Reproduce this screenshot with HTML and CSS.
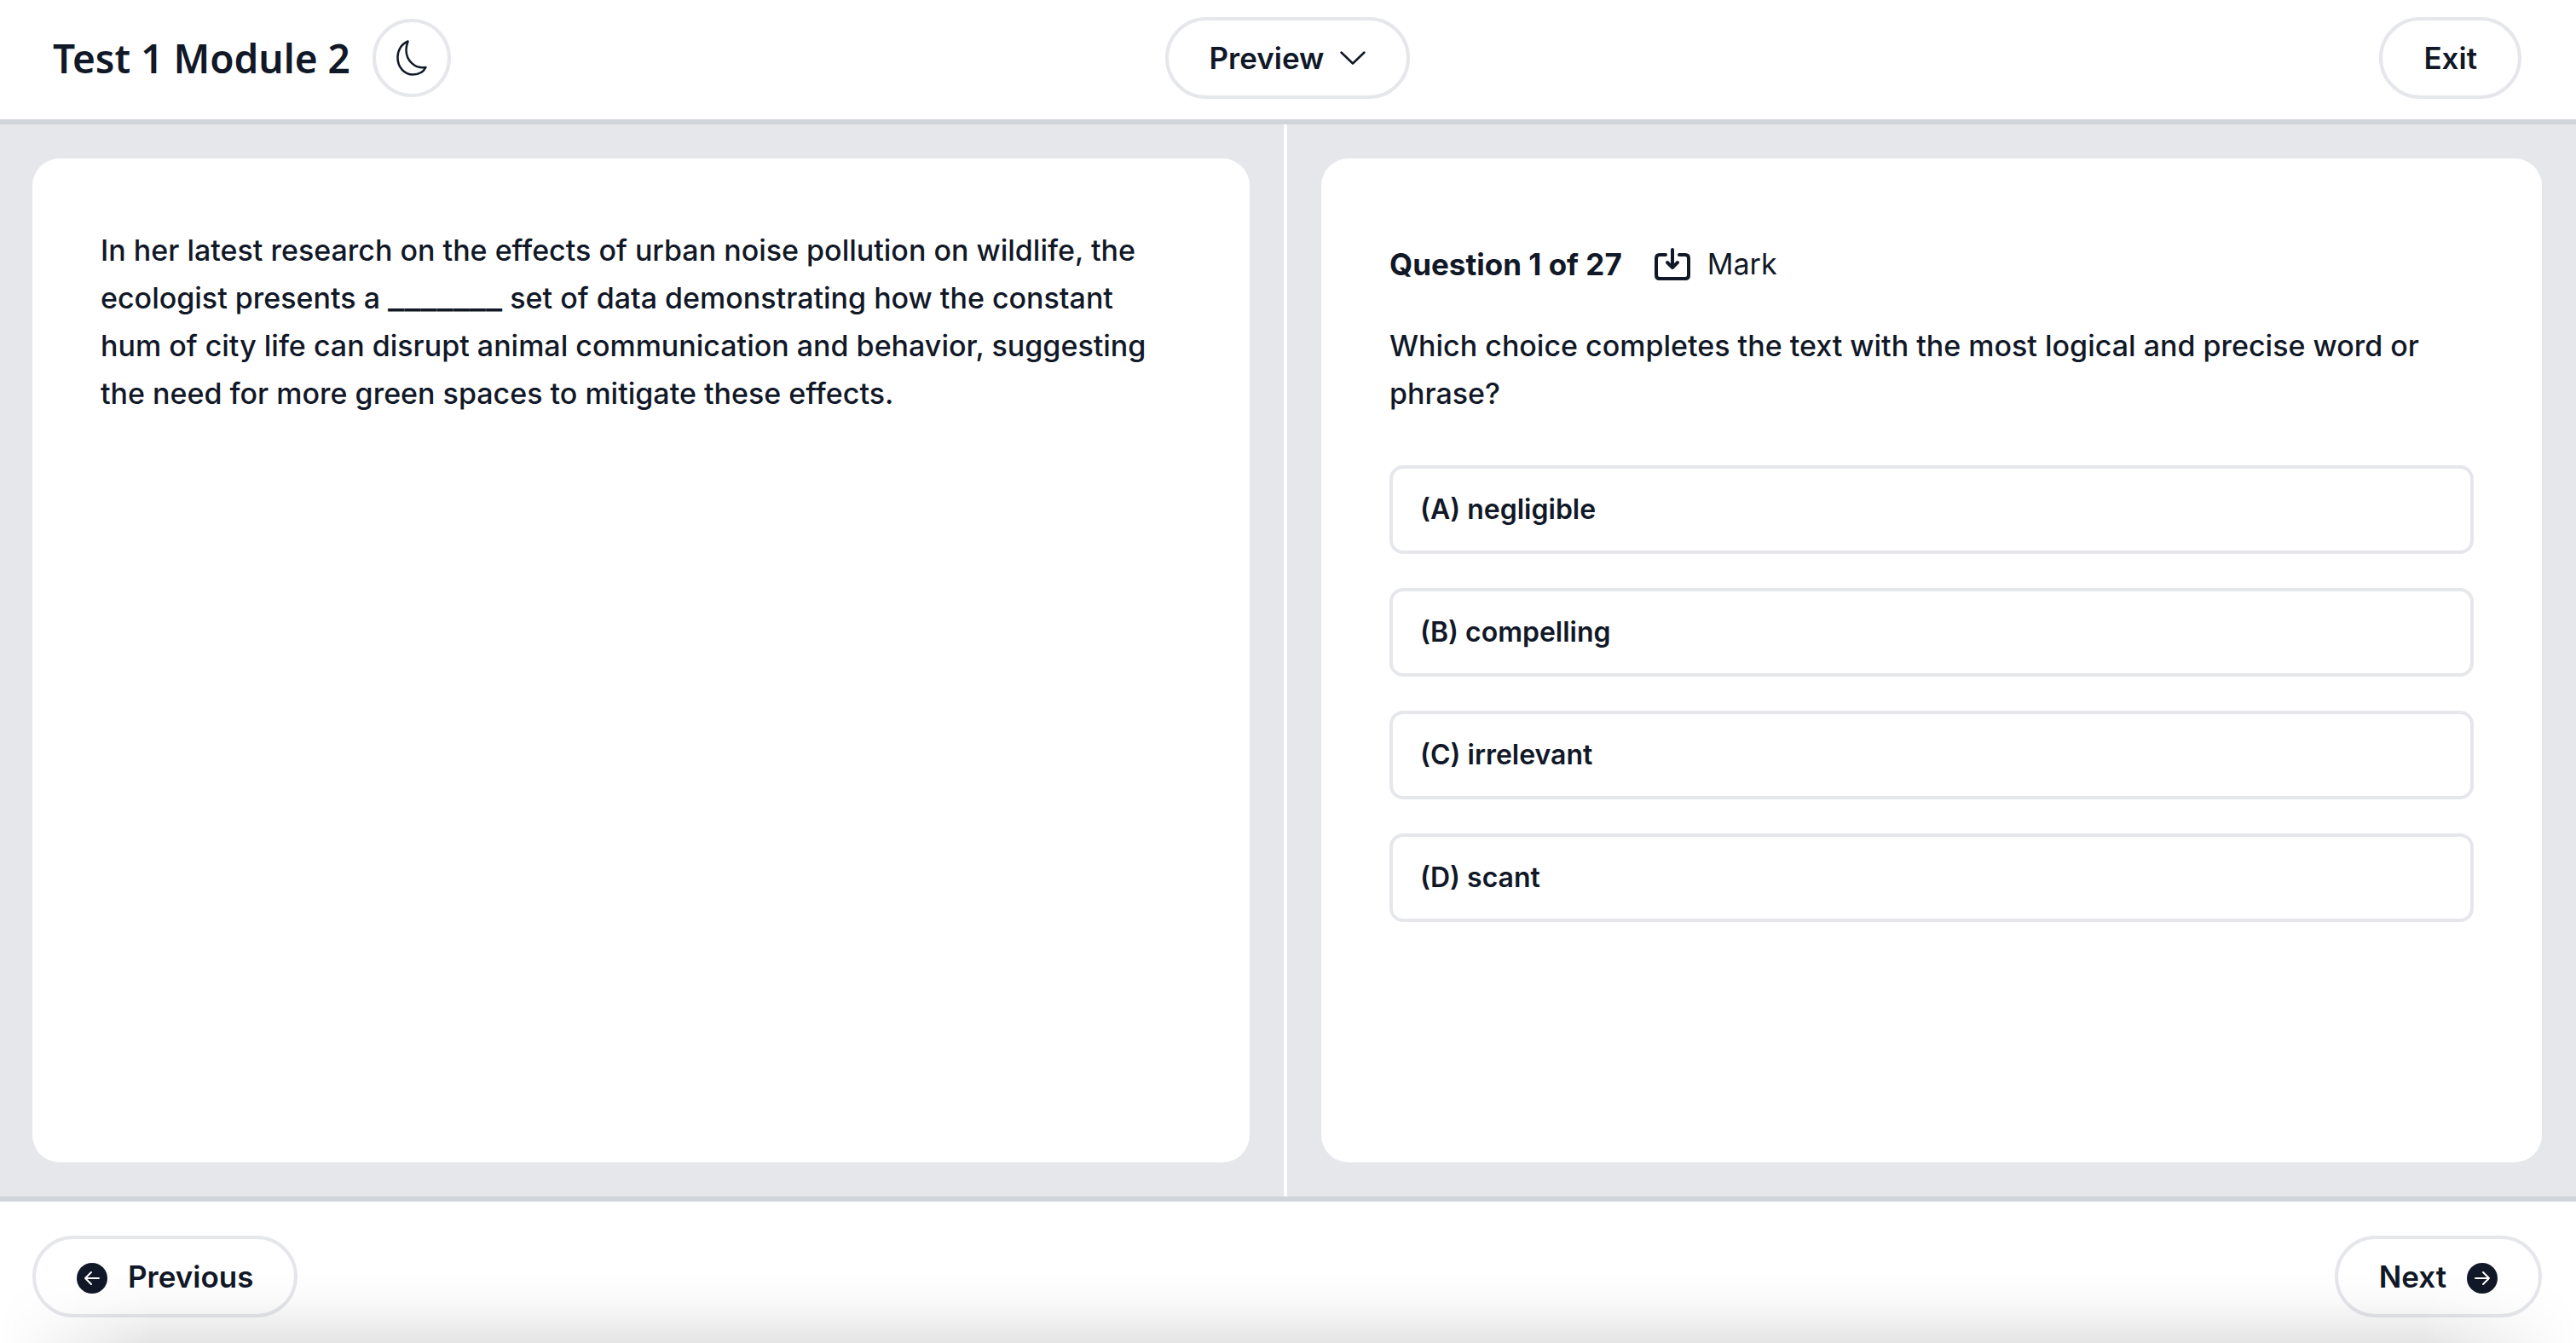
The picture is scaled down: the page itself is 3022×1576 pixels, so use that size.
FILE: index.html
```html
<!DOCTYPE html>
<html lang="en">
<head>
<meta charset="utf-8">
<meta name="viewport" content="width=device-width, initial-scale=1">
<title>Test 1 Module 2</title>
<link rel="stylesheet" href="styles.css">
</head>
<body>
<header class="topbar">
  <div class="topbar-start">
    <h1 class="title">Test 1 Module 2</h1>
    <button class="theme-toggle" type="button" aria-label="Toggle dark mode">
      <svg class="icon-moon" viewBox="0 0 36 42" fill="none" stroke="currentColor" stroke-width="2.500" stroke-linejoin="round" aria-hidden="true"><path d="M13.500 1.500C6 4.500 1.500 12 1.500 20.500C1.500 32 9.500 40.500 19.500 40.500C26 40.500 31.500 38 34.500 32C22 34 11.500 24.500 11.500 11.500C11.500 8 12.500 4.500 13.500 1.500Z"/></svg>
    </button>
  </div>
  <button class="pill" type="button">Preview
    <svg class="icon-chevron" viewBox="0 0 30 16" fill="none" stroke="currentColor" stroke-width="2.500" stroke-linecap="round" stroke-linejoin="round" aria-hidden="true"><path d="M1.500 1.500L15 14.500L28.500 1.500"/></svg>
  </button>
  <div class="topbar-end">
    <button class="pill" type="button">Exit</button>
  </div>
</header>

<main class="workspace">
  <section class="pane pane-passage">
    <article class="card">
      <p class="text">In her latest research on the effects of urban noise pollution on wildlife, the ecologist presents a <span class="blank">_______</span> set of data demonstrating how the constant hum of city life can disrupt animal communication and behavior, suggesting the need for more green spaces to mitigate these effects.</p>
    </article>
  </section>
  <section class="pane pane-question">
    <div class="card">
      <div class="question-head">
        <h2 class="question-count">Question 1 of 27</h2>
        <button class="mark" type="button">
          <svg class="icon-mark" viewBox="0 0 42 38" fill="none" stroke="currentColor" stroke-width="4" stroke-linecap="round" stroke-linejoin="round" aria-hidden="true"><path d="M13 8H6Q2 8 2 12V32Q2 36 6 36H36Q40 36 40 32V12Q40 8 36 8H29M21 2V23M15 17L21 23L27 17"/></svg>
          Mark
        </button>
      </div>
      <p class="text">Which choice completes the text with the most logical and precise word or phrase?</p>
      <div class="options">
        <button class="option" type="button">(A) negligible</button>
        <button class="option" type="button">(B) compelling</button>
        <button class="option" type="button">(C) irrelevant</button>
        <button class="option" type="button">(D) scant</button>
      </div>
    </div>
  </section>
</main>

<footer class="bottombar">
  <button class="pill pill-nav" type="button">
    <svg class="icon-arrow" viewBox="0 0 36 36" aria-hidden="true"><circle cx="18" cy="18" r="18" fill="currentColor"/><path d="M26 18H10M17 11L10 18L17 25" fill="none" stroke="#fff" stroke-width="2" stroke-linecap="round" stroke-linejoin="round"/></svg>
    Previous
  </button>
  <button class="pill pill-nav" type="button">
    Next
    <svg class="icon-arrow" viewBox="0 0 36 36" aria-hidden="true"><circle cx="18" cy="18" r="18" fill="currentColor"/><path d="M10 18H26M19 11L26 18L19 25" fill="none" stroke="#fff" stroke-width="2" stroke-linecap="round" stroke-linejoin="round"/></svg>
  </button>
</footer>
</body>
</html>
```
FILE: styles.css
```css
*,
*::before,
*::after {
  box-sizing: border-box;
}

body {
  margin: 0;
  min-height: 100vh;
  display: flex;
  flex-direction: column;
  background: #fff;
  color: #111827;
  font-family: Inter, "Liberation Sans", sans-serif;
  font-size: 35px;
  line-height: 56px;
}

h1,
h2,
p {
  margin: 0;
}

button {
  margin: 0;
  background: none;
  color: inherit;
  font: inherit;
  cursor: pointer;
}

svg {
  display: block;
  flex: none;
}

.topbar {
  display: grid;
  grid-template-columns: 1fr auto 1fr;
  align-items: center;
  padding: 20px 64px 24px 62px;
  border-bottom: 6px solid #d1d5db;
}

.topbar-start {
  display: flex;
  align-items: center;
  gap: 26px;
}

.topbar-end {
  display: flex;
  justify-content: flex-end;
}

.title {
  font-family: "Noto Sans", sans-serif;
  font-size: 46px;
  font-weight: 600;
}

.theme-toggle {
  display: grid;
  place-items: center;
  width: 92px;
  height: 92px;
  padding: 0;
  border: 4px solid #e5e7eb;
  border-radius: 50%;
}

.pill {
  display: inline-flex;
  align-items: center;
  gap: 18px;
  padding: 16px 48px;
  border: 4px solid #e5e7eb;
  border-radius: 48px;
  font-weight: 600;
}

.pill-nav {
  gap: 24px;
}

.icon-moon {
  width: 36px;
  height: 42px;
}

.icon-chevron {
  width: 30px;
  height: 16px;
}

.icon-arrow {
  width: 36px;
  height: 36px;
  margin-top: 4px;
}

.icon-mark {
  width: 42px;
  height: 38px;
}

.workspace {
  flex: 1;
  display: grid;
  grid-template-columns: calc(50% - 1px) 1fr;
  background: #e5e7eb;
}

.pane {
  display: grid;
  padding: 40px;
}

.pane-passage {
  padding-left: 38px;
  border-right: 4px solid #fff;
}

.card {
  padding: 80px;
  border-radius: 32px;
  background: #fff;
}

.text {
  font-size: 34px;
  font-weight: 500;
}

.blank {
  font-size: 42px;
  font-weight: 400;
  line-height: 1;
}

.question-head {
  display: flex;
  align-items: center;
  gap: 38px;
  padding: 16px 0;
  margin-bottom: 24px;
}

.question-count {
  font-size: 35px;
  font-weight: 700;
}

.mark {
  display: flex;
  align-items: center;
  gap: 20px;
  padding: 0;
  border: 0;
  font-size: 34px;
}

.options {
  display: grid;
  gap: 40px;
  margin-top: 56px;
}

.option {
  padding: 20px 32px;
  border: 4px solid #e5e7eb;
  border-radius: 16px;
  font-size: 32px;
  font-weight: 600;
  text-align: left;
}

.bottombar {
  position: relative;
  display: flex;
  justify-content: space-between;
  padding: 40px 40px 30px 38px;
  border-top: 6px solid #d1d5db;
}

.bottombar::after {
  content: "";
  position: absolute;
  inset: auto 0 0;
  height: 84px;
  background: linear-gradient(to top, rgba(0, 0, 0, 0.1), rgba(0, 0, 0, 0.02) 60%, transparent);
  mask-image: linear-gradient(to right, transparent, #000 180px, #000 calc(100% - 180px), transparent);
  pointer-events: none;
}
```
